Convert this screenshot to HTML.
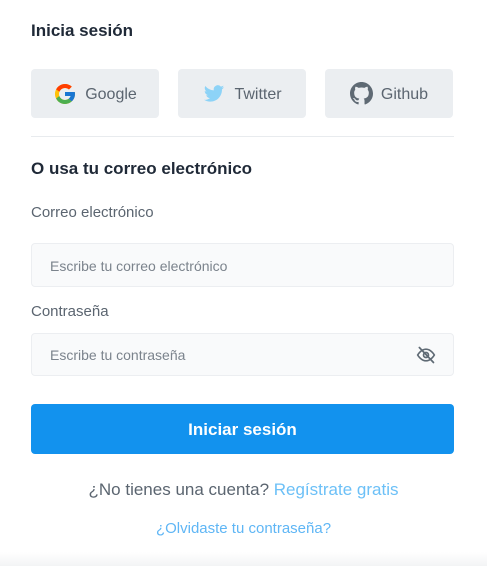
<!DOCTYPE html><html><head><style>
body{margin:0;width:487px;height:566px;background:#fff;font-family:"Liberation Sans",sans-serif;position:relative;overflow:hidden}
.a{position:absolute}
h1{position:absolute;margin:0;font-size:17px;font-weight:bold;color:#1f2937}
.sb{position:absolute;top:69px;width:128px;height:49px;background:#ebeef1;border-radius:4px;display:flex;align-items:center;justify-content:center;gap:8px;color:#5b6570;font-size:16px;padding-top:3px;box-sizing:border-box}
.sb svg{margin-top:-3px}
.lbl{position:absolute;left:31px;font-size:15px;color:#5b6570}
.in{position:absolute;left:31px;height:43px;border:1px solid #eceef1;background:#f9fafb;border-radius:4px;font-size:14px;color:#7b838c;line-height:43px;padding-left:18px;box-sizing:border-box;width:423px}
</style></head><body>
<h1 style="left:31px;top:21px">Inicia sesión</h1>
<div class="sb" style="left:31px"><svg width="24" height="24" viewBox="0 0 48 48"><path fill="#FFC107" d="M43.6 20H24v8h11.3C33.7 33 29.3 36 24 36c-6.6 0-12-5.4-12-12s5.4-12 12-12c3 0 5.8 1.1 7.9 3l5.7-5.7C34 6 29.3 4 24 4 13 4 4 13 4 24s9 20 20 20 20-9 20-20c0-1.3-.1-2.7-.4-4z"/><path fill="#FF3D00" d="M6.3 14.7l6.6 4.8C14.7 15.1 19 12 24 12c3 0 5.8 1.1 7.9 3l5.7-5.7C34 6 29.3 4 24 4 16.3 4 9.7 8.3 6.3 14.7z"/><path fill="#4CAF50" d="M24 44c5.2 0 9.9-2 13.4-5.2l-6.2-5.2C29.2 35.1 26.7 36 24 36c-5.2 0-9.6-3.3-11.3-8l-6.5 5C9.5 39.6 16.2 44 24 44z"/><path fill="#1976D2" d="M43.6 20H24v8h11.3c-.8 2.2-2.2 4.2-4.1 5.6l6.2 5.2C37 39.2 44 34 44 24c0-1.3-.1-2.7-.4-4z"/></svg>Google</div>
<div class="sb" style="left:178px"><svg width="24" height="22" viewBox="0 0 24 24"><path fill="#8dd3f7" d="M23 4.6c-.8.4-1.7.6-2.6.7.9-.6 1.6-1.4 2-2.5-.9.5-1.9.9-2.9 1.1A4.5 4.5 0 0 0 11.8 8 12.8 12.8 0 0 1 2.5 3.3a4.5 4.5 0 0 0 1.4 6 4.5 4.5 0 0 1-2-.6c0 2.2 1.5 4 3.6 4.5-.7.2-1.4.2-2 .1.6 1.8 2.3 3.1 4.2 3.1A9 9 0 0 1 1 18.3 12.8 12.8 0 0 0 7.9 20.3c8.3 0 12.8-6.9 12.8-12.8v-.6c.9-.6 1.6-1.4 2.3-2.3z"/></svg>Twitter</div>
<div class="sb" style="left:325px"><svg width="23" height="23" viewBox="0 0 16 16"><path fill="#5f6a74" d="M8 0C3.6 0 0 3.6 0 8c0 3.5 2.3 6.5 5.5 7.6.4.1.5-.2.5-.4v-1.4c-2.2.5-2.7-1-2.7-1-.4-.9-.9-1.2-.9-1.2-.7-.5.1-.5.1-.5.8.1 1.2.8 1.2.8.7 1.2 1.9.9 2.3.7.1-.5.3-.9.5-1.1-1.8-.2-3.6-.9-3.6-4 0-.9.3-1.6.8-2.1-.1-.2-.4-1 .1-2.1 0 0 .7-.2 2.2.8a7.500 7.500 0 0 1 4 0c1.5-1 2.2-.8 2.2-.8.4 1.1.2 1.9.1 2.1.5.6.8 1.300.8 2.100 0 3.100-1.900 3.800-3.600 4 .3.3.6.8.6 1.500v2.200c0 .2.1.5.6.4A8 8 0 0 0 16 8c0-4.4-3.6-8-8-8z"/></svg>Github</div>
<div class="a" style="left:31px;top:136px;width:423px;height:1px;background:#e8ebee"></div>
<h1 style="left:31px;top:159px">O usa tu correo electrónico</h1>
<div class="lbl" style="top:204px">Correo electrónico</div>
<div class="in" style="top:243px;height:44px;line-height:44px">Escribe tu correo electrónico</div>
<div class="lbl" style="top:303px">Contraseña</div>
<div class="in" style="top:333px">Escribe tu contraseña
<svg style="position:absolute;right:16px;top:11px" width="22" height="20" viewBox="0 0 24 24" fill="none" stroke="#5f6a74" stroke-width="2" stroke-linecap="round"><path d="M2 12s4-7 10-7 10 7 10 7-4 7-10 7S2 12 2 12z"/><circle cx="12" cy="12" r="3"/><path d="M4 3l17 18"/></svg></div>
<div class="a" style="left:31px;top:404px;width:423px;height:50px;background:#1292ee;border-radius:4px;color:#fff;font-weight:bold;font-size:17px;text-align:center;line-height:52px">Iniciar sesión</div>
<div class="a" style="left:0;width:487px;top:480px;text-align:center;font-size:17px;color:#5b6570">¿No tienes una cuenta? <span style="color:#6cc0f7">Regístrate gratis</span></div>
<div class="a" style="left:0;width:487px;top:520px;text-align:center;font-size:15px;color:#5fb6f5">¿Olvidaste tu contraseña?</div>
<div class="a" style="left:0;top:552px;width:487px;height:14px;background:linear-gradient(#fff,#f3f4f5)"></div>
</body></html>
